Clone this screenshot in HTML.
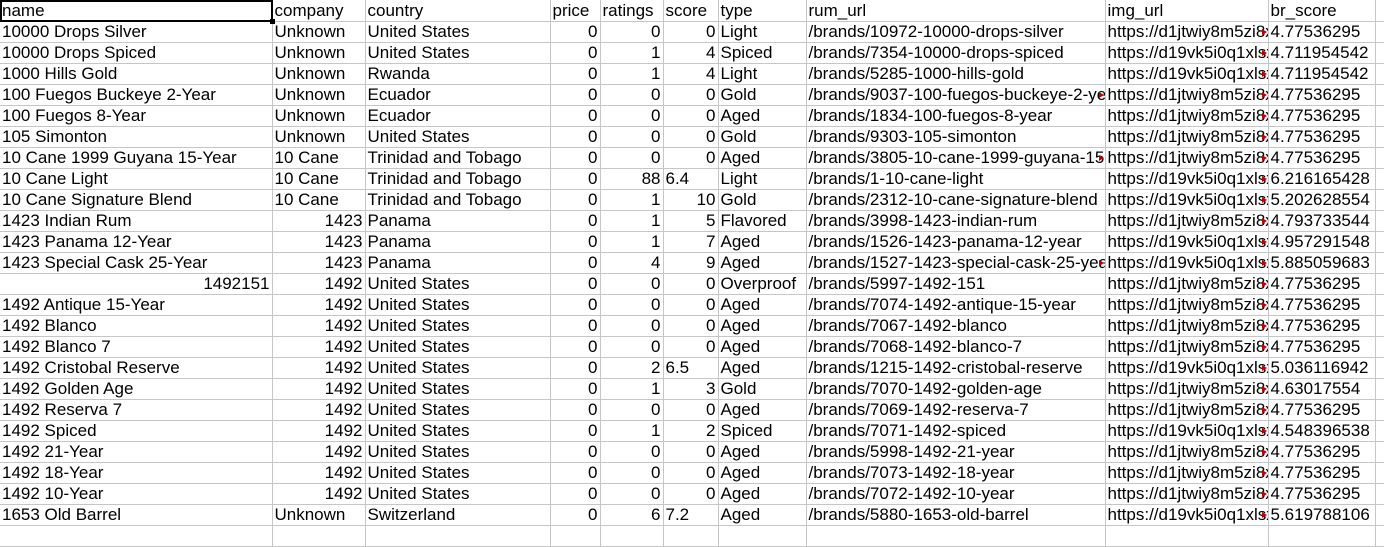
<!DOCTYPE html><html><head><meta charset="utf-8"><style>
body{margin:0;background:#fff;width:1384px;height:529px;overflow:hidden;font-family:"Liberation Sans",sans-serif;font-size:17px;color:#000}
table{border-collapse:collapse;table-layout:fixed;position:absolute;left:0;top:0;width:1384px}
tr{height:21px}
td{height:20px;padding:0 2px;border-right:1px solid #c6c6c6;border-bottom:1px solid #c6c6c6;white-space:nowrap;overflow:hidden;line-height:20px;vertical-align:bottom;position:relative}
td.r{text-align:right}
td.c{padding-right:0}
td.c::after{content:"";position:absolute;right:1px;top:7px;border-left:5px solid #c00000;border-top:3px solid transparent;border-bottom:3px solid transparent}
.sel{position:absolute;left:0;top:0;width:269px;height:18px;border:2px solid #000}
.sel::after{content:"";position:absolute;right:-4px;bottom:-4px;width:5px;height:5px;background:#000}
</style></head><body>
<table>
<colgroup><col style="width:272px"><col style="width:93px"><col style="width:185px"><col style="width:50px"><col style="width:63px"><col style="width:55px"><col style="width:88px"><col style="width:299px"><col style="width:163px"><col style="width:107px"><col style="width:9px"></colgroup>
<tr><td>name</td><td>company</td><td>country</td><td>price</td><td>ratings</td><td>score</td><td>type</td><td>rum_url</td><td>img_url</td><td>br_score</td><td></td></tr>
<tr><td>10000 Drops Silver</td><td>Unknown</td><td>United States</td><td class="r">0</td><td class="r">0</td><td class="r">0</td><td>Light</td><td>/brands/10972-10000-drops-silver</td><td class="c">https://d1jtwiy8m5zi8xxxx</td><td>4.77536295</td><td></td></tr>
<tr><td>10000 Drops Spiced</td><td>Unknown</td><td>United States</td><td class="r">0</td><td class="r">1</td><td class="r">4</td><td>Spiced</td><td>/brands/7354-10000-drops-spiced</td><td class="c">https://d19vk5i0q1xlsxxxx</td><td>4.711954542</td><td></td></tr>
<tr><td>1000 Hills Gold</td><td>Unknown</td><td>Rwanda</td><td class="r">0</td><td class="r">1</td><td class="r">4</td><td>Light</td><td>/brands/5285-1000-hills-gold</td><td class="c">https://d19vk5i0q1xlsxxxx</td><td>4.711954542</td><td></td></tr>
<tr><td>100 Fuegos Buckeye 2-Year</td><td>Unknown</td><td>Ecuador</td><td class="r">0</td><td class="r">0</td><td class="r">0</td><td>Gold</td><td class="c">/brands/9037-100-fuegos-buckeye-2-year</td><td class="c">https://d1jtwiy8m5zi8xxxx</td><td>4.77536295</td><td></td></tr>
<tr><td>100 Fuegos 8-Year</td><td>Unknown</td><td>Ecuador</td><td class="r">0</td><td class="r">0</td><td class="r">0</td><td>Aged</td><td>/brands/1834-100-fuegos-8-year</td><td class="c">https://d1jtwiy8m5zi8xxxx</td><td>4.77536295</td><td></td></tr>
<tr><td>105 Simonton</td><td>Unknown</td><td>United States</td><td class="r">0</td><td class="r">0</td><td class="r">0</td><td>Gold</td><td>/brands/9303-105-simonton</td><td class="c">https://d1jtwiy8m5zi8xxxx</td><td>4.77536295</td><td></td></tr>
<tr><td>10 Cane 1999 Guyana 15-Year</td><td>10 Cane</td><td>Trinidad and Tobago</td><td class="r">0</td><td class="r">0</td><td class="r">0</td><td>Aged</td><td class="c">/brands/3805-10-cane-1999-guyana-15-year</td><td class="c">https://d1jtwiy8m5zi8xxxx</td><td>4.77536295</td><td></td></tr>
<tr><td>10 Cane Light</td><td>10 Cane</td><td>Trinidad and Tobago</td><td class="r">0</td><td class="r">88</td><td>6.4</td><td>Light</td><td>/brands/1-10-cane-light</td><td class="c">https://d19vk5i0q1xlsxxxx</td><td>6.216165428</td><td></td></tr>
<tr><td>10 Cane Signature Blend</td><td>10 Cane</td><td>Trinidad and Tobago</td><td class="r">0</td><td class="r">1</td><td class="r">10</td><td>Gold</td><td>/brands/2312-10-cane-signature-blend</td><td class="c">https://d19vk5i0q1xlsxxxx</td><td>5.202628554</td><td></td></tr>
<tr><td>1423 Indian Rum</td><td class="r">1423</td><td>Panama</td><td class="r">0</td><td class="r">1</td><td class="r">5</td><td>Flavored</td><td>/brands/3998-1423-indian-rum</td><td class="c">https://d1jtwiy8m5zi8xxxx</td><td>4.793733544</td><td></td></tr>
<tr><td>1423 Panama 12-Year</td><td class="r">1423</td><td>Panama</td><td class="r">0</td><td class="r">1</td><td class="r">7</td><td>Aged</td><td>/brands/1526-1423-panama-12-year</td><td class="c">https://d19vk5i0q1xlsxxxx</td><td>4.957291548</td><td></td></tr>
<tr><td>1423 Special Cask 25-Year</td><td class="r">1423</td><td>Panama</td><td class="r">0</td><td class="r">4</td><td class="r">9</td><td>Aged</td><td class="c">/brands/1527-1423-special-cask-25-year</td><td class="c">https://d19vk5i0q1xlsxxxx</td><td>5.885059683</td><td></td></tr>
<tr><td class="r">1492151</td><td class="r">1492</td><td>United States</td><td class="r">0</td><td class="r">0</td><td class="r">0</td><td>Overproof</td><td>/brands/5997-1492-151</td><td class="c">https://d1jtwiy8m5zi8xxxx</td><td>4.77536295</td><td></td></tr>
<tr><td>1492 Antique 15-Year</td><td class="r">1492</td><td>United States</td><td class="r">0</td><td class="r">0</td><td class="r">0</td><td>Aged</td><td>/brands/7074-1492-antique-15-year</td><td class="c">https://d1jtwiy8m5zi8xxxx</td><td>4.77536295</td><td></td></tr>
<tr><td>1492 Blanco</td><td class="r">1492</td><td>United States</td><td class="r">0</td><td class="r">0</td><td class="r">0</td><td>Aged</td><td>/brands/7067-1492-blanco</td><td class="c">https://d1jtwiy8m5zi8xxxx</td><td>4.77536295</td><td></td></tr>
<tr><td>1492 Blanco 7</td><td class="r">1492</td><td>United States</td><td class="r">0</td><td class="r">0</td><td class="r">0</td><td>Aged</td><td>/brands/7068-1492-blanco-7</td><td class="c">https://d1jtwiy8m5zi8xxxx</td><td>4.77536295</td><td></td></tr>
<tr><td>1492 Cristobal Reserve</td><td class="r">1492</td><td>United States</td><td class="r">0</td><td class="r">2</td><td>6.5</td><td>Aged</td><td>/brands/1215-1492-cristobal-reserve</td><td class="c">https://d19vk5i0q1xlsxxxx</td><td>5.036116942</td><td></td></tr>
<tr><td>1492 Golden Age</td><td class="r">1492</td><td>United States</td><td class="r">0</td><td class="r">1</td><td class="r">3</td><td>Gold</td><td>/brands/7070-1492-golden-age</td><td class="c">https://d1jtwiy8m5zi8xxxx</td><td>4.63017554</td><td></td></tr>
<tr><td>1492 Reserva 7</td><td class="r">1492</td><td>United States</td><td class="r">0</td><td class="r">0</td><td class="r">0</td><td>Aged</td><td>/brands/7069-1492-reserva-7</td><td class="c">https://d1jtwiy8m5zi8xxxx</td><td>4.77536295</td><td></td></tr>
<tr><td>1492 Spiced</td><td class="r">1492</td><td>United States</td><td class="r">0</td><td class="r">1</td><td class="r">2</td><td>Spiced</td><td>/brands/7071-1492-spiced</td><td class="c">https://d19vk5i0q1xlsxxxx</td><td>4.548396538</td><td></td></tr>
<tr><td>1492 21-Year</td><td class="r">1492</td><td>United States</td><td class="r">0</td><td class="r">0</td><td class="r">0</td><td>Aged</td><td>/brands/5998-1492-21-year</td><td class="c">https://d1jtwiy8m5zi8xxxx</td><td>4.77536295</td><td></td></tr>
<tr><td>1492 18-Year</td><td class="r">1492</td><td>United States</td><td class="r">0</td><td class="r">0</td><td class="r">0</td><td>Aged</td><td>/brands/7073-1492-18-year</td><td class="c">https://d1jtwiy8m5zi8xxxx</td><td>4.77536295</td><td></td></tr>
<tr><td>1492 10-Year</td><td class="r">1492</td><td>United States</td><td class="r">0</td><td class="r">0</td><td class="r">0</td><td>Aged</td><td>/brands/7072-1492-10-year</td><td class="c">https://d1jtwiy8m5zi8xxxx</td><td>4.77536295</td><td></td></tr>
<tr><td>1653 Old Barrel</td><td>Unknown</td><td>Switzerland</td><td class="r">0</td><td class="r">6</td><td>7.2</td><td>Aged</td><td>/brands/5880-1653-old-barrel</td><td class="c">https://d19vk5i0q1xlsxxxx</td><td>5.619788106</td><td></td></tr>
<tr><td></td><td></td><td></td><td></td><td></td><td></td><td></td><td></td><td></td><td></td><td></td></tr>
</table>
<div class="sel"></div>
</body></html>
